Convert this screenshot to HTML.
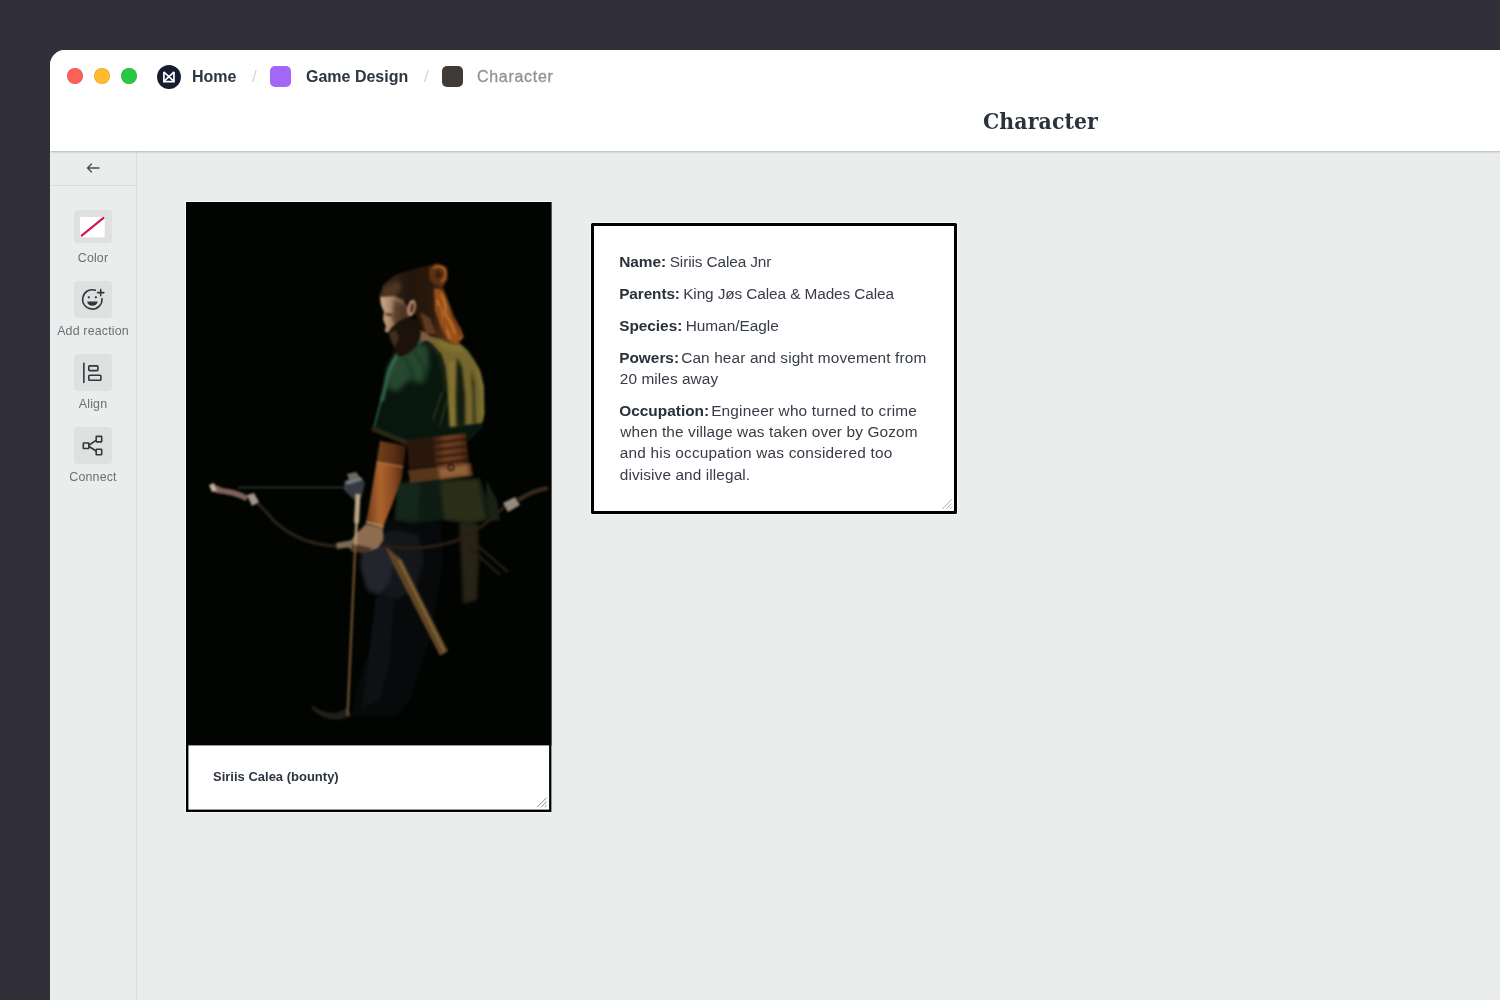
<!DOCTYPE html>
<html lang="en">
<head>
<meta charset="utf-8">
<title>Character</title>
<style>
*{box-sizing:border-box;margin:0;padding:0}
html,body{width:1500px;height:1000px;overflow:hidden;background:#302f3a;font-family:"Liberation Sans",sans-serif}
.abs{position:absolute}
.gl{position:absolute;left:0;top:0;width:100%;height:100%;will-change:transform}
#win{position:absolute;left:50px;top:50px;width:1460px;height:960px;background:#e9edec;border-top-left-radius:15px;overflow:hidden}
#hdr{position:absolute;left:0;top:0;width:1460px;height:101px;background:#fff;box-shadow:0 1px 2px rgba(0,0,0,.22);z-index:5}
.dot{position:absolute;top:18px;width:16px;height:16px;border-radius:50%;box-shadow:inset 0 0 0 .6px rgba(0,0,0,.14)}
.crumb{position:absolute;top:17px;font-size:16px;font-weight:700;color:#2d3540;line-height:20px;white-space:nowrap}
.sep{position:absolute;top:17px;font-size:17px;color:#d3d5d8;line-height:20px}
.sq{position:absolute;top:16px;width:21px;height:21px;border-radius:5px}
#title{position:absolute;left:933px;top:55px;font-family:"DejaVu Serif","Liberation Serif",serif;font-stretch:condensed;font-weight:700;font-size:22.7px;letter-spacing:.12px;line-height:32px;color:#2b323c;white-space:nowrap}
#side{position:absolute;left:0;top:101px;width:87px;height:860px;border-right:1px solid #d9dddc;background:#e9edec}
#back{position:absolute;left:0;top:0;width:86px;height:35px;border-bottom:1px solid #d9dddc}
.tool{position:absolute;left:24.3px;width:37.4px;height:37px;border-radius:4px;background:#dfe1e1}
.tlabel{position:absolute;left:0;width:86px;text-align:center;font-size:12.4px;letter-spacing:.17px;line-height:16px;color:#6b7076;white-space:nowrap}
.card{position:absolute;background:#fff;border:3px solid #000;border-radius:1.5px;box-shadow:0 0 0 1px rgba(255,255,255,.65)}
#txt .t{position:absolute;font-size:15.4px;line-height:20px;color:#373d47;white-space:nowrap}
#txt b.t{color:#2a313b}
</style>
</head>
<body>
<div id="win">
  <div id="hdr">
    <div class="dot" style="left:17px;background:#fe5f57"></div>
    <div class="dot" style="left:44px;background:#febc2e"></div>
    <div class="dot" style="left:71px;background:#28c840"></div>
    <svg class="abs" style="left:107px;top:14.900px" width="24" height="24" viewBox="0 0 24 24"><circle cx="12" cy="12" r="11.950" fill="#151e2e"/><path d="M6.900 6.900V16.550H16.950V6.900" fill="none" stroke="#fff" stroke-width="1.700" stroke-linejoin="miter"/><path d="M6.700 6.800L17 16.300M17.150 6.800L6.850 16.300" fill="none" stroke="#fff" stroke-width="1.650"/></svg>
    <div class="sq" style="left:220px;background:#a366f6"></div>
    <div class="sq" style="left:392px;background:#3f3a36"></div>
    <div class="gl">
    <div class="crumb" style="left:142px">Home</div>
    <div class="sep" style="left:202px">/</div>
    <div class="crumb" style="left:256px">Game Design</div>
    <div class="sep" style="left:374px">/</div>
    <div class="crumb" style="left:427px;color:#8e9297;font-weight:400;letter-spacing:.7px;-webkit-text-stroke:.3px #8e9297">Character</div>
    <div id="title">Character</div>
    </div>
  </div>
  <div id="side">
    <div id="back">
      <svg class="abs" style="left:36px;top:11.500px" width="14" height="10" viewBox="0 0 14 10"><path d="M13 5H1.500M5.500 1L1.500 5l4 4" fill="none" stroke="#474c54" stroke-width="1.300" stroke-linecap="round" stroke-linejoin="round"/></svg>
    </div>
    <div class="tool" style="top:58.6px;height:33px"></div>
    <svg class="abs" style="left:24.3px;top:58.6px" width="37.4" height="33" viewBox="74.3 209.6 37.4 33"><rect x="80.3" y="216.6" width="24.7" height="20.3" fill="#fff"/><path d="M82 235.200L103.800 217.500" stroke="#d1174f" stroke-width="2.100" stroke-linecap="round"/></svg>
    <div class="tool" style="top:129.600px"></div>
    <svg class="abs" style="left:24.3px;top:129.600px" width="37.4" height="37" viewBox="74.3 280.600 37.4 37" fill="none" stroke="#33363d" stroke-width="1.550" stroke-linecap="round"><path d="M95.700 289.800A9.700 9.700 0 1 0 102.300 298.200"/><path d="M101 289v6.400M97.800 292.200h6.400"/><circle cx="89.100" cy="296.900" r="1.150" fill="#33363d" stroke="none"/><circle cx="96.200" cy="296.900" r="1.150" fill="#33363d" stroke="none"/><path d="M87.500 301h10.400a5.200 4.400 0 0 1-10.400 0z" fill="#33363d" stroke="none"/></svg>
    <div class="tool" style="top:202.600px"></div>
    <svg class="abs" style="left:24.3px;top:202.600px" width="37.4" height="37" viewBox="74.3 353.600 37.4 37" fill="none" stroke="#33363d" stroke-width="1.600" stroke-linecap="round" stroke-linejoin="round"><path d="M84.150 362.800v19.300"/><rect x="89.100" y="365.500" width="9.100" height="4.700" rx=".8"/><rect x="89.100" y="374.800" width="12.100" height="5" rx=".8"/></svg>
    <div class="tool" style="top:276.200px"></div>
    <svg class="abs" style="left:24.3px;top:276.200px" width="37.4" height="37" viewBox="74.3 427.200 37.4 37" fill="none" stroke="#33363d" stroke-width="1.600" stroke-linejoin="round"><rect x="83.600" y="443.200" width="5.500" height="5.500" rx=".6"/><rect x="96.500" y="436.600" width="5.500" height="5.500" rx=".6"/><rect x="96.500" y="449.500" width="5.500" height="5.500" rx=".6"/><path d="M89.500 445.200L96.300 440.600M89.500 446.700L96.300 451.200"/></svg>
    <div class="gl">
    <div class="tlabel" style="top:98.500px">Color</div>
    <div class="tlabel" style="top:171.500px">Add reaction</div>
    <div class="tlabel" style="top:244.500px">Align</div>
    <div class="tlabel" style="top:317.500px">Connect</div>
    </div>
  </div>
  <div class="abs" style="left:136px;top:152px;width:365.400px;height:610px;box-shadow:0 0 0 1px rgba(255,255,255,.65)"></div>
  <div class="abs" id="img" style="left:136px;top:152px;width:366px;height:611px">
    <svg class="abs" id="photo" style="left:0;top:0" width="366" height="611" viewBox="186 202 366 611">
<defs>
<filter color-interpolation-filters="sRGB" id="b1" x="-20%" y="-20%" width="140%" height="140%"><feGaussianBlur color-interpolation-filters="sRGB" stdDeviation="0.85"/></filter>
<filter color-interpolation-filters="sRGB" id="b2" x="-20%" y="-20%" width="140%" height="140%"><feGaussianBlur color-interpolation-filters="sRGB" stdDeviation="1.6"/></filter>
<filter color-interpolation-filters="sRGB" id="b3" x="-30%" y="-30%" width="160%" height="160%"><feGaussianBlur color-interpolation-filters="sRGB" stdDeviation="2.6"/></filter>
<filter color-interpolation-filters="sRGB" id="b4" x="-30%" y="-30%" width="160%" height="160%"><feGaussianBlur color-interpolation-filters="sRGB" stdDeviation="4"/></filter>
<linearGradient id="gTunic" x1="376" y1="0" x2="486" y2="0" gradientUnits="userSpaceOnUse">
<stop offset="0" stop-color="#20402c"/><stop offset=".22" stop-color="#2a4d36"/><stop offset=".42" stop-color="#1b2c1d"/><stop offset=".56" stop-color="#4a4d24"/><stop offset=".75" stop-color="#716b2d"/><stop offset="1" stop-color="#5a5625"/>
</linearGradient>
<linearGradient id="gTunicV" x1="0" y1="340" x2="0" y2="460" gradientUnits="userSpaceOnUse">
<stop offset="0" stop-color="#000" stop-opacity="0"/><stop offset=".6" stop-color="#000" stop-opacity=".15"/><stop offset="1" stop-color="#000" stop-opacity=".6"/>
</linearGradient>
<linearGradient id="gHair" x1="385" y1="0" x2="462" y2="0" gradientUnits="userSpaceOnUse">
<stop offset="0" stop-color="#3a2818"/><stop offset=".3" stop-color="#22150b"/><stop offset=".6" stop-color="#2a180c"/><stop offset=".8" stop-color="#5e3314"/><stop offset="1" stop-color="#7a4118"/>
</linearGradient>
<linearGradient id="gFace" x1="380" y1="0" x2="412" y2="0" gradientUnits="userSpaceOnUse">
<stop offset="0" stop-color="#cfad8f"/><stop offset=".35" stop-color="#a98465"/><stop offset=".75" stop-color="#5f4431"/><stop offset="1" stop-color="#3a281c"/>
</linearGradient>
<linearGradient id="gArm" x1="0" y1="0" x2="1" y2="0">
<stop offset="0" stop-color="#6e3a18"/><stop offset=".35" stop-color="#ae652e"/><stop offset=".7" stop-color="#874820"/><stop offset="1" stop-color="#41200d"/>
</linearGradient>
<linearGradient id="gBelt" x1="432" y1="0" x2="472" y2="0" gradientUnits="userSpaceOnUse">
<stop offset="0" stop-color="#351c0e"/><stop offset=".35" stop-color="#6b3d1e"/><stop offset=".7" stop-color="#5e3418"/><stop offset="1" stop-color="#28150a"/>
</linearGradient>
</defs>
<rect x="186" y="202" width="365.400" height="610" fill="#000"/>
<rect x="186" y="202" width="365.400" height="543.400" fill="#020401"/>
<rect x="188.400" y="745.400" width="360.700" height="64.200" fill="#fff"/>
<g filter="url(#b1)">
<!-- pants -->
<path d="M364 520 L440 516 L444 560 L430 640 L410 700 L398 716 L352 716 L356 690 L372 640 L378 600 L362 585 L358 550 Z" fill="#07090a"/>
<path d="M362 540 L392 530 L418 534 L424 560 L416 590 L396 600 L368 592 L360 566 Z" fill="#14161b" filter="url(#b2)"/>
<path d="M363 548 L388 544 L394 560 L390 582 L379 594 L367 588 L361 566 Z" fill="#22252c" filter="url(#b2)"/>
<path d="M376 597 L394 600 L390 660 L380 700 L362 708 L368 660 Z" fill="#0e1013"/>
<!-- boot -->
<path d="M312 705 Q322 713 336 713 L347 708 L352 716 L338 720 Q320 719 312 709 Z" fill="#1f1f1c"/>
<!-- hanging cloth right -->
<path d="M459 522 L478 523 L479 560 L477 600 L463 604 L461 560 Z" fill="#2e2a1a" opacity=".85" filter="url(#b2)"/>
<path d="M486 480 L497 500 L500 520 L488 522 Z" fill="#1d2a19" opacity=".8"/>
<!-- skirt of tunic -->
<path d="M398 482 L480 478 L487 498 L489 520 L470 524 L440 520 L410 524 L394 520 Z" fill="#0e1c13"/>
<path d="M440 482 L478 479 L486 519 L470 523 L444 519 Z" fill="#2b2e17" filter="url(#b2)"/>
<path d="M398 484 L420 483 L418 520 L396 519 Z" fill="#1d3524" opacity=".45" filter="url(#b2)"/>
<!-- tunic base -->
<path d="M398 353 L410 345 L420 339 L436 336 L452 340 L466 347 L476 360 L483 376 L485 414 L482 428 L470 440 L440 446 L420 448 L412 444 L373 428 L377 410 L382 392 L386 369 Z" fill="#08170e"/>
<!-- green lit shoulder -->
<path d="M397 352 L418 342 L428 347 L429 366 L423 384 L409 380 L397 392 L387 388 L388 368 Z" fill="#26482f" filter="url(#b3)"/>
<path d="M403 356 Q412 366 415 390 M412 350 Q424 360 428 384" stroke="#0f2a1c" stroke-width="2" fill="none" filter="url(#b2)" opacity=".7"/>
<!-- rim light on sleeve -->
<path d="M420 341 L399 353 Q389 365 385.500 386 L382 400" stroke="#3a7455" stroke-width="3.200" fill="none" stroke-linecap="round" filter="url(#b1)"/>
<path d="M382 398 L378 412 L374 427" stroke="#3a7f5f" stroke-width="1.300" fill="none" stroke-linecap="round" opacity=".85"/>
<!-- olive lit back -->
<path d="M426 340 L440 337.500 L460 343.500 L468 351 L474 360 L480 370 L484 386 L484.500 414 L482 423 L466 425 L450 427 L448 400 L447 384 L445 366 L441 354 L432 344 Z" fill="#75672d"/>
<path d="M436 341 L458 345 L466 352 L452 352 L442 347 Z" fill="#85742f" filter="url(#b2)" opacity=".9"/>
<path d="M449 362 L455 360 L456 426 L449.500 427 Z" fill="#877632" filter="url(#b1)" opacity=".85"/>
<path d="M457 357 L462 368 L465 396 L465 426 L456.500 426 L456 396 Z" fill="#121d0f" filter="url(#b1)"/>
<path d="M471 368 L474.500 384 L475.500 424 L473.500 424 L473 396 Z" fill="#1a2410" filter="url(#b1)"/>
<path d="M478 372 L482 390 L482.500 420" stroke="#8c7a34" stroke-width="1.600" fill="none" opacity=".8"/>
<path d="M430 344 L440 356 L444 372 L446 392" stroke="#2c2f16" stroke-width="2.600" fill="none" filter="url(#b2)" opacity=".8"/>
<path d="M442 392 L433 420 M447 400 L440 426" stroke="#4a4522" stroke-width="1.400" fill="none" opacity=".7"/>
<!-- sleeve hem -->
<path d="M372.500 426 L412 442 L410.500 447 L371.500 431 Z" fill="#2b2716"/>
<!-- belt -->
<path d="M407 440 L434 436 L436 466 L409 469 Z" fill="#2a170c"/>
<path d="M433 437 L466 433 L469 465 L436 469 Z" fill="url(#gBelt)"/>
<path d="M434 443 L467 439 M435 450 L468 446 M436 457 L469 453 M436.500 464 L469 460" stroke="#22120a" stroke-width="1.700" fill="none"/>
<path d="M408 470 L471 463 L473 476 L410 483 Z" fill="#573519"/>
<path d="M438 468 L468 464 L469 475 L440 479 Z" fill="#94623a" filter="url(#b2)"/>
<circle cx="451" cy="467.500" r="2.800" fill="none" stroke="#1c0f07" stroke-width="1.300"/>
<!-- arm / bracer -->
<path d="M380 441 L406 446 L402 478 L392 505 L383 527 L366 523 L371 495 L376 465 Z" fill="url(#gArm)"/>
<path d="M380 441 L406 446 L403 466 L376.500 462 Z" fill="#2e150a" opacity=".5"/>
<path d="M376.500 462 L403 467" stroke="#d08a48" stroke-width="1.100"/>
<path d="M366 522 L384 527" stroke="#c9a780" stroke-width="1.400"/>
<!-- hand -->
<path d="M366 524 L383 528 L383.500 540 L378 548 L366 552 L352 551 L348 546 L354 536 Z" fill="#8f6c4f"/>
<path d="M352 544 L372 548 L366 553 L351 552 Z" fill="#4d3625"/>
<!-- neck -->
<path d="M418 330 L432 333 L437 338 L421 342 Z" fill="#7d5e40"/>
<!-- hair -->
<path d="M379 297 L383 285 L395 275 L414 269 L426 266 L437 263 L446 268 L448 279 L443 287 L448 300 L454 316 L461 329 L464 337 L457 345 L449 343 L441 339 L430 336 L421 330 L416 316 L408 302 L396 297 Z" fill="url(#gHair)"/>
<path d="M381 296 L386 287 L398 280 L402 288 L396 296 Z" fill="#5a3e28" opacity=".7" filter="url(#b2)"/>
<path d="M429 268 Q439 261 446.500 267 Q450 278 442 286 Q432 286 429 278 Z" fill="#5a3013"/>
<path d="M433 268 Q440 264 445 270 Q447 278 441 282" fill="none" stroke="#b86c2c" stroke-width="2.200" opacity=".85"/>
<path d="M436 272 Q440 270 441 275 Q440 279 436 278 Z" fill="#2e180a" opacity=".8"/>
<path d="M434 289 Q444 287 447 300 L453 317 L461 331 L463 338 L456 344 L448 340 L441 327 L435 310 Z" fill="#98501a"/>
<path d="M441 294 Q447 304 445 314 Q452 322 455 334 M437 300 Q443 312 442 322 Q448 330 450 339" stroke="#dc8a38" stroke-width="1.700" fill="none" opacity=".75"/>
<path d="M444 292 Q451 306 452 318 Q458 326 460 336 M439 306 Q440 318 446 330" stroke="#4a2810" stroke-width="1.300" fill="none" opacity=".7"/>
<path d="M420 312 L430 318 L436 334 L426 334 Z" fill="#6b4526" opacity=".8"/>
<!-- face -->
<path d="M380 297 L394 296 L404 300 L410 312 L409 324 L400 329 L392 331 L388 333 L384.500 331 L386 327 L383 319 L384 312 L381 305 Z" fill="url(#gFace)"/>
<path d="M385 313 L393 314 L392 316 L386 315.500 Z" fill="#4a3426"/>
<path d="M394 300 L406 308 L406 324 L397 329 L392 319 Z" fill="#3a271b" opacity=".6" filter="url(#b2)"/>
<!-- ear -->
<ellipse cx="411.500" cy="308" rx="4.200" ry="8.500" fill="#b58c6c" transform="rotate(12 411.500 308)"/>
<ellipse cx="412" cy="308" rx="1.800" ry="5" fill="#4f3424" transform="rotate(12 412 308)"/>
<!-- beard -->
<path d="M388 332.500 L392 327 L399 321 L408 317 L418 321 L421 334 L417 346 L408 354 L399 357 L394 350 L390 340 Z" fill="#1d120a"/>
<path d="M389 333 L396 330 L399 338 L395 347 L391 340 Z" fill="#4a3424" opacity=".8"/>
<!-- axe -->
<path d="M344 482 L361 477 L365 483 L362 496 L354 500 L344 490 Z" fill="#343942"/>
<path d="M345 481 L360 477 L363 480 L347 485 Z" fill="#767b82"/>
<path d="M347 474 L356 472 L360 477 L349 480 Z" fill="#6f6b5a"/>
<!-- staff -->
<path d="M357.500 496 L347.500 716" stroke="#735733" stroke-width="2.200" fill="none"/>
<path d="M358 494 L356.500 523" stroke="#bfa884" stroke-width="5" fill="none"/>
<path d="M356.500 523 L355.500 545" stroke="#b39d7d" stroke-width="2.600" fill="none"/>
<!-- second bow / sticks -->
<path d="M385 546 L402 560 L448 651 L440 656 L394 566 Z" fill="#5e4624"/>
<path d="M399 560 L444.500 652" stroke="#86683a" stroke-width="2" fill="none"/>
<path d="M470 548 L500 575 M478 546 L508 572" stroke="#241c12" stroke-width="2.500" fill="none"/>
<!-- bow left limb -->
<path d="M250 497 Q262 506 274 521 Q300 545 337 546" stroke="#2b2119" stroke-width="3.400" fill="none"/>
<path d="M210 486 Q214 483 222 488 Q236 489 248 496 L246 501 Q232 494 216 493 Z" fill="#80635a"/>
<path d="M209 485 L214 483 L217 491 L212 492 Z" fill="#c4b09c"/>
<path d="M247 495 L254 493 L259 502 L252 506 Z" fill="#a3978a"/>
<path d="M336 543 L352 540 L352 547 L337 549 Z" fill="#786c56"/>
<path d="M238 487.500 L345 487.500" stroke="#5f5f58" stroke-width=".8" fill="none"/>
<!-- bow right limb -->
<path d="M383 546 Q420 552 455 541 Q485 528 505 506" stroke="#2a1e15" stroke-width="3" fill="none"/>
<path d="M503 503 L515 497 L520 505 L508 512 Z" fill="#958c7e"/>
<path d="M518 500 Q534 490 548 488" stroke="#38281d" stroke-width="4.500" fill="none"/>
</g>
</svg>
    <div class="gl"><div class="abs" id="cap" style="left:27px;top:567px;font-size:13px;font-weight:700;color:#2d3540;line-height:16px;white-space:nowrap">Siriis Calea (bounty)</div></div>
  </div>
  <div class="card" id="txt" style="left:541px;top:173px;width:366px;height:291px">
  <div class="gl">
    <b class="t" style="left:25.20px;top:25.66px;letter-spacing:0.000px">Name: </b>
    <span class="t" style="left:75.70px;top:25.66px;letter-spacing:-0.120px">Siriis Calea Jnr</span>
    <b class="t" style="left:25.20px;top:57.66px;letter-spacing:-0.114px">Parents: </b>
    <span class="t" style="left:89.20px;top:57.66px;letter-spacing:-0.111px">King Jøs Calea &amp; Mades Calea</span>
    <b class="t" style="left:25.20px;top:89.66px;letter-spacing:-0.029px">Species: </b>
    <span class="t" style="left:91.70px;top:89.66px;letter-spacing:-0.020px">Human/Eagle</span>
    <b class="t" style="left:25.20px;top:121.86px;letter-spacing:0.000px">Powers: </b>
    <span class="t" style="left:87.20px;top:121.86px;letter-spacing:0.123px">Can hear and sight movement from </span>
    <span class="t" style="left:25.80px;top:143.06px;letter-spacing:0.067px">20 miles away</span>
    <b class="t" style="left:25.20px;top:175.30px;letter-spacing:0.020px">Occupation: </b>
    <span class="t" style="left:117.20px;top:175.30px;letter-spacing:0.170px">Engineer who turned to crime </span>
    <span class="t" style="left:26.30px;top:196.00px;letter-spacing:0.118px">when the village was taken over by Gozom </span>
    <span class="t" style="left:25.80px;top:217.40px;letter-spacing:0.200px">and his occupation was considered too </span>
    <span class="t" style="left:25.80px;top:238.80px;letter-spacing:0.100px">divisive and illegal.</span>
  </div>
  </div>
<svg class="abs" style="left:484px;top:744px" width="16" height="16" viewBox="534 794 16 16"><path d="M537.100 807.200L546.600 797.700M541.100 807.200L546.600 801.700M544.900 807.200L546.600 805.500" stroke="#868686" stroke-width="1" fill="none"/></svg>
<svg class="abs" style="left:889px;top:446px" width="16" height="16" viewBox="939 496 16 16"><path d="M942.400 508.800L951.700 499.500M946.500 508.800L951.700 503.500M950 508.800L952 506.800" stroke="#a9a9a9" stroke-width="1" fill="none"/></svg>
</div>
</body>
</html>
